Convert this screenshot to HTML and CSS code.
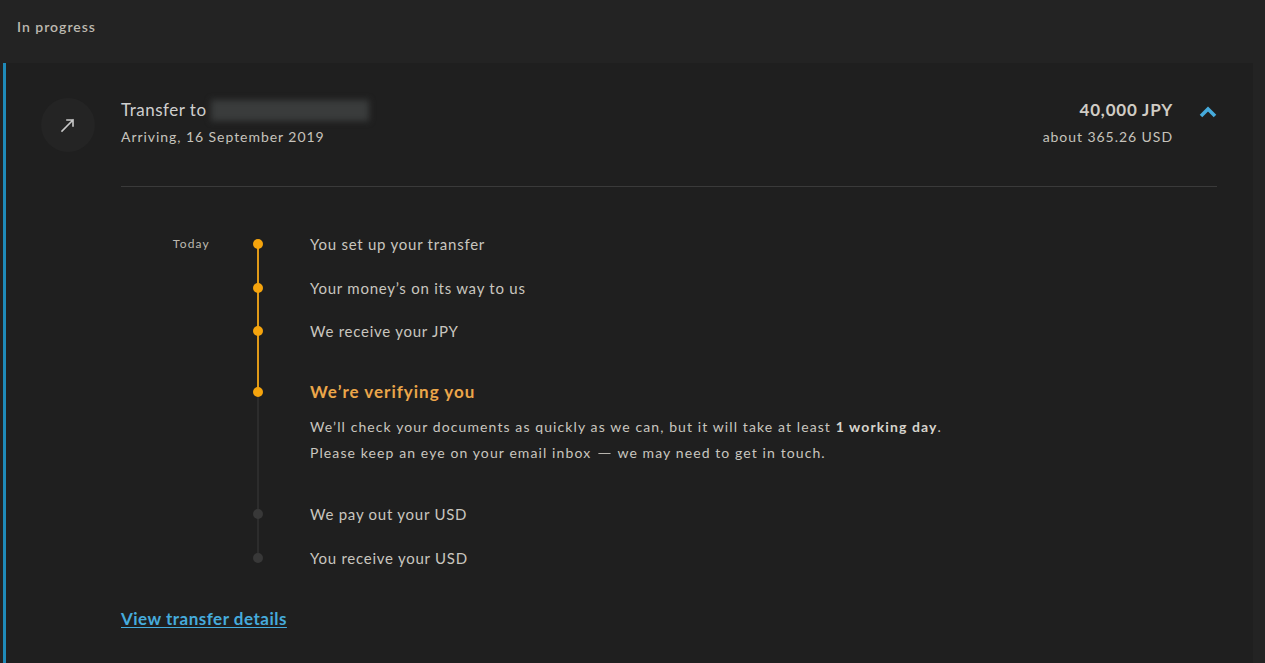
FILE: index.html
```html
<!DOCTYPE html>
<html lang="en">
<head>
<meta charset="utf-8">
<title>In progress</title>
<link rel="stylesheet" href="styles.css">
</head>
<body>
<div class="page">
  <div class="section-title">In progress</div>
  <div class="card">
    <div class="summary">
      <div class="icon-circle">
        <svg width="18" height="18" viewBox="0 0 18 18"><path d="M3 15 L14 4 M8 4 H14 V10" fill="none" stroke="#c8c8c8" stroke-width="1.6" stroke-linecap="square"/></svg>
      </div>
      <div class="summary-main">
        <div class="title">Transfer to <span class="blurred"></span></div>
        <div class="sub">Arriving, 16 September 2019</div>
      </div>
      <div class="summary-amount">
        <div class="amount">40,000 JPY</div>
        <div class="sub">about 365.26 USD</div>
      </div>
      <div class="chevron">
        <svg width="18" height="12" viewBox="0 0 18 12"><path d="M2 10 L9 3 L16 10" fill="none" stroke="#46abdc" stroke-width="3.6"/></svg>
      </div>
    </div>
    <div class="details">
      <div class="divider"></div>
      <div class="timeline">
        <div class="step done s1">
          <div class="when">Today</div>
          <div class="rail"><span class="dot"></span></div>
          <div class="what">You set up your transfer</div>
        </div>
        <div class="step done s2">
          <div class="when"></div>
          <div class="rail"><span class="dot"></span></div>
          <div class="what">Your money’s on its way to us</div>
        </div>
        <div class="step done s3">
          <div class="when"></div>
          <div class="rail"><span class="dot"></span></div>
          <div class="what">We receive your JPY</div>
        </div>
        <div class="step current s4">
          <div class="when"></div>
          <div class="rail"><span class="dot"></span></div>
          <div class="what">
            <div class="heading">We’re verifying you</div>
            <p class="note">We’ll check your documents as quickly as we can, but it will take at least <strong>1 working day</strong>.<br>Please keep an eye on your email inbox <span class="dash">—</span> we may need to get in touch.</p>
          </div>
        </div>
        <div class="step pending s5">
          <div class="when"></div>
          <div class="rail"><span class="dot"></span></div>
          <div class="what">We pay out your USD</div>
        </div>
        <div class="step pending last">
          <div class="when"></div>
          <div class="rail"><span class="dot"></span></div>
          <div class="what">You receive your USD</div>
        </div>
      </div>
      <a class="details-link" href="#">View transfer details</a>
    </div>
  </div>
</div>
</body>
</html>
```
FILE: styles.css
```css
html, body {
  margin: 0;
  padding: 0;
  background: #232323;
  height: 100%;
  overflow: hidden;
}
body {
  font-family: "Lato", "Open Sans", sans-serif;
  color: #c9c6bf;
}
.page {
  padding: 0 12px 0 3px;
}
.section-title {
  height: 63px;
  line-height: 54px;
  padding-left: 14px;
  font-size: 14px;
  font-weight: 600;
  letter-spacing: 1px;
  color: #bdb9b0;
}
.card {
  box-sizing: border-box;
  background: #1f1f1f;
  border-left: 3px solid #1f8ab8;
  padding: 35px 36px 40px 35px;
  min-height: calc(100vh - 63px);
}
.summary {
  display: flex;
  align-items: flex-start;
}
.icon-circle {
  width: 54px;
  height: 54px;
  border-radius: 50%;
  background: #242424;
  display: flex;
  align-items: center;
  justify-content: center;
  flex: none;
}
.summary-main {
  margin-left: 26px;
  flex: 1;
}
.title {
  font-size: 17px;
  line-height: 24px;
  letter-spacing: 0.5px;
  color: #cfcfcf;
  display: flex;
  align-items: center;
}
.blurred {
  display: inline-block;
  width: 158px;
  height: 21px;
  margin-left: 4px;
  background: #3a3c3c;
  filter: blur(3px);
}
.sub {
  font-size: 14px;
  line-height: 22px;
  letter-spacing: 0.95px;
  margin-top: 4px;
  color: #c6c3bc;
}
.summary-amount {
  text-align: right;
}
.amount {
  font-size: 17px;
  line-height: 24px;
  font-weight: 700;
  letter-spacing: 0.8px;
  color: #d0ccc4;
}
.chevron {
  width: 18px;
  margin-left: 26px;
  padding-top: 4px;
}
.details {
  padding-left: 80px;
}
.divider {
  height: 1px;
  background: #3a3a3a;
  margin-top: 34px;
}
.timeline {
  margin-top: 46px;
}
.step {
  display: grid;
  grid-template-columns: 89px 48px 1fr;
  column-gap: 24px;
  font-size: 15px;
  line-height: 22px;
  letter-spacing: 0.75px;
}
.step.s1, .step.s5 { padding-bottom: 22px; }
.step.s2 { padding-bottom: 21px; }
.step.s3 { padding-bottom: 39px; }
.step.s4 { padding-bottom: 37px; }
.when {
  font-size: 12px;
  letter-spacing: 1.2px;
  text-align: right;
  color: #bdb9b0;
}
.rail {
  position: relative;
}
.rail::before {
  content: "";
  position: absolute;
  left: 23px;
  width: 2px;
  top: 11px;
  bottom: -11px;
  margin-bottom: calc(-1 * var(--pb, 0px));
}
.step.s1 .rail::before { --pb: 22px; }
.step.s2 .rail::before { --pb: 21px; }
.step.s3 .rail::before { --pb: 39px; }
.step.s4 .rail::before { --pb: 37px; }
.step.s5 .rail::before { --pb: 22px; }
.step.done .rail::before { background: #e09a18; }
.step.current .rail::before, .step.pending .rail::before { background: #2c2c2c; }
.step.last .rail::before { display: none; }
.dot {
  position: absolute;
  left: 19px;
  top: 6px;
  width: 10px;
  height: 10px;
  border-radius: 50%;
  z-index: 1;
}
.done .dot, .current .dot { background: #f5a40d; }
.pending .dot { background: #383838; }
.what {
  color: #c9c6bf;
  margin-left: 4px;
}
.heading {
  font-size: 17px;
  font-weight: 700;
  letter-spacing: 1px;
  color: #eba64a;
}
.note {
  margin: 11px 0 0;
  font-size: 14px;
  line-height: 26px;
  letter-spacing: 1.1px;
}
.note .dash {
  display: inline-block;
  transform: scaleX(1.3);
  margin: 0 3px;
  letter-spacing: 0;
}
.note strong {
  color: #d6d3cc;
}
.details-link {
  display: inline-block;
  margin-top: 38px;
  font-size: 17px;
  line-height: 24px;
  font-weight: 700;
  letter-spacing: 0.5px;
  color: #46abdc;
  text-decoration: underline;
  text-underline-offset: 2px;
}
```
